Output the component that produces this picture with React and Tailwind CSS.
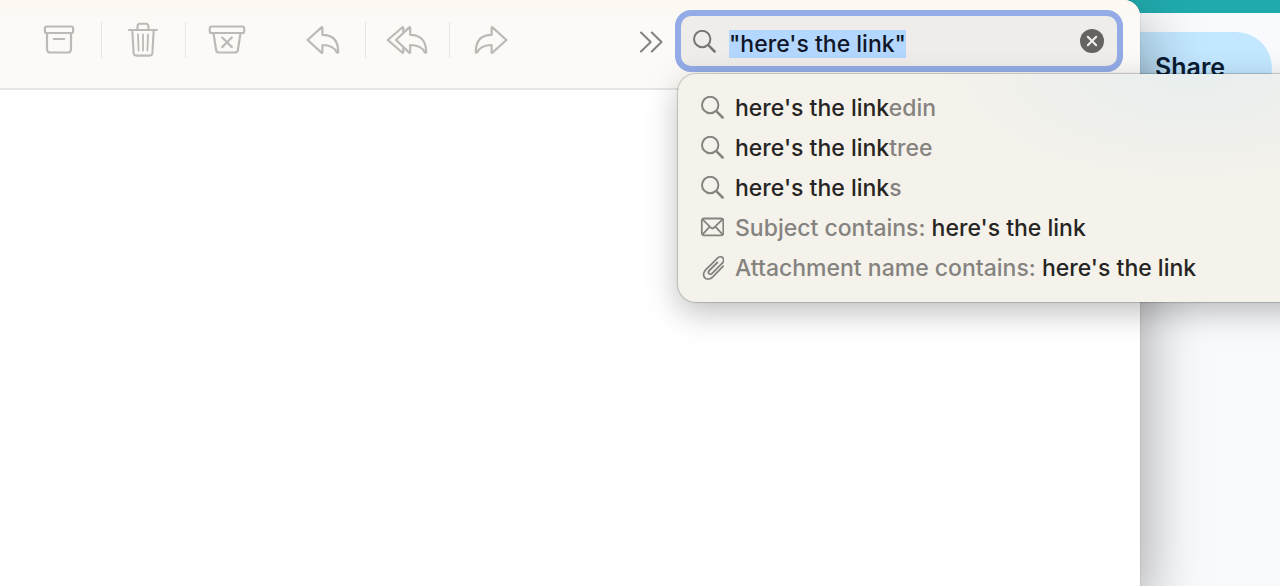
import { useEffect, useRef, useState } from "react";

const SearchIcon = ({ className }) => (
    <svg viewBox="0 0 24 24" className={className} fill="none" stroke="currentColor" strokeLinecap="round">
        <circle cx="10.2" cy="9" r="8.2" strokeWidth="2" />
        <path d="M16.300 15.200l6.300 6.300" strokeWidth="2.5" />
    </svg>
);

const MailIcon = ({ className }) => (
    <svg viewBox="0 0 24 24" className={className} fill="none" stroke="currentColor" strokeWidth="1.8" strokeLinecap="round" strokeLinejoin="round">
        <rect x="1.800" y="2.500" width="21.500" height="16.800" rx="2" />
        <path d="M2.800 3.700l8 8c1 1 2.200 1 3.200 0l8.300-8M2.800 18.200l6.500-7M22.300 18.200l-6.500-7" />
    </svg>
);

const ClipIcon = ({ className }) => (
    <svg viewBox="0 0 24 24" className={className} fill="none" stroke="currentColor" strokeWidth="1.8" strokeLinecap="round" strokeLinejoin="round">
        <path d="M23.200 10.200L12.800 20.800c-2.400 2.400-5.800 3-7.900 1s-1.700-5.400.7-7.900L17.300 2.300c1.700-1.700 4.100-1.900 5.500-.5s1.200 3.700-.5 5.400L12.100 17.300c-1 1-2.400 1.200-3.200.4s-.6-2.200.4-3.200l8.100-8" />
    </svg>
);

const ArchiveIcon = () => (
    <svg width="32" height="34" viewBox="0 0 32 34" fill="none" stroke="currentColor" strokeWidth="2.2" strokeLinecap="round" strokeLinejoin="round">
        <rect x="1.900" y="3.500" width="28.200" height="6.500" rx="1.800" />
        <path d="M4 10v16.500a3 3 0 0 0 3 3h18a3 3 0 0 0 3-3V10M10.800 16h10.400" />
    </svg>
);

const TrashIcon = () => (
    <svg width="32" height="36" viewBox="0 0 32 36" fill="none" stroke="currentColor" strokeWidth="2.1" strokeLinecap="round" strokeLinejoin="round">
        <path d="M2 8h28M10.500 8V4.200a2.500 2.500 0 0 1 2.500-2.500h6a2.500 2.500 0 0 1 2.500 2.500V8" />
        <path d="M5.300 8l1.300 23a2.800 2.800 0 0 0 2.800 2.600h13.200a2.800 2.800 0 0 0 2.800-2.600L26.700 8" />
        <path d="M11 12.500l.6 16M16 12.500v16M21 12.500l-.6 16" strokeWidth="1.800" />
    </svg>
);

const JunkIcon = () => (
    <svg width="38" height="34" viewBox="0 0 38 34" fill="none" stroke="currentColor" strokeWidth="2.2" strokeLinecap="round" strokeLinejoin="round">
        <rect x="1.800" y="3.500" width="34.400" height="6.500" rx="1.800" />
        <path d="M5.500 10l2.600 17a3 3 0 0 0 3 2.500h15.800a3 3 0 0 0 3-2.500l2.600-17M14.200 14.500l9.600 9.600M23.800 14.500l-9.600 9.600" />
    </svg>
);

const ReplyIcon = ({ className }) => (
    <svg width="34" height="30" viewBox="0 0 34 30" className={className} fill="none" stroke="currentColor" strokeWidth="2.2" strokeLinejoin="round">
        <path d="M1.600 15L15.500 2.400c.4-.4.900-.2.900.4V9.900C27 9.900 32.200 16 32.200 27c0 .8-.8 1-1.300.4C28.300 22.200 24 20 16.400 20v7.200c0 .6-.5.800-.9.400z" />
    </svg>
);

const ReplyAllIcon = () => (
    <svg width="42" height="30" viewBox="0 0 42 30" fill="none" stroke="currentColor" strokeWidth="2.2" strokeLinejoin="round">
        <path d="M10 15L23.300 2.400c.4-.4.900-.2.900.4V9.900C34.500 9.900 40.200 16 40.200 27c0 .8-.8 1-1.300.4C36.300 22.200 31.600 20 24.200 20v7.200c0 .6-.5.800-.9.400z" />
        <path d="M17.300 7.500V3c0-.8-.6-1-1.100-.5L1.800 15l14.400 12.500c.5.500 1.100.3 1.100-.5v-4.700" />
    </svg>
);

const groups = [
    [
        { label: "Archive", icon: <ArchiveIcon /> },
        { label: "Delete", icon: <TrashIcon /> },
        { label: "Move to Junk", icon: <JunkIcon /> },
    ],
    [
        { label: "Reply", icon: <ReplyIcon /> },
        { label: "Reply All", icon: <ReplyAllIcon /> },
        { label: "Forward", icon: <ReplyIcon className="-scale-x-100" /> },
    ],
];

const suggestions = [
    { icon: SearchIcon, match: "here's the link", after: "edin" },
    { icon: SearchIcon, match: "here's the link", after: "tree" },
    { icon: SearchIcon, match: "here's the link", after: "s" },
    { icon: MailIcon, before: "Subject contains: ", match: "here's the link" },
    { icon: ClipIcon, before: "Attachment name contains: ", match: "here's the link" },
];

const SearchField = () => {
    const [query, setQuery] = useState("\"here's the link\"");
    const inputRef = useRef(null);

    //Start with the whole query selected
    useEffect(() => {
        inputRef.current.focus();
        inputRef.current.select();
    }, []);

    return (
        <div className="relative w-[448px] shrink-0">
            <div className="flex h-[62px] items-center rounded-2xl border-6 border-[#93abe6] bg-[#efede9] pl-[11px] pr-[13px]">
                <SearchIcon className="mt-0.5 size-6 shrink-0 text-[#777673]" />
                <input
                    ref={inputRef}
                    type="text"
                    aria-label="Search"
                    value={query}
                    onChange={(e) => setQuery(e.target.value)}
                    className="ml-[13px] mt-1.5 h-7 min-w-0 flex-1 bg-transparent text-[23px] leading-7 font-[450] text-[#101528] outline-none selection:bg-[#b3d7ff] selection:text-[#101528]"
                />
                <button
                    aria-label="Clear search"
                    onClick={() => setQuery("")}
                    className="flex size-6 items-center justify-center rounded-full bg-[#656461] text-[#f3f1ed]"
                >
                    <svg width="24" height="24" viewBox="0 0 24 24" fill="none" stroke="currentColor" strokeWidth="2" strokeLinecap="round">
                        <path d="M7.800 7.800l8.400 8.400M16.200 7.800l-8.400 8.400" />
                    </svg>
                </button>
            </div>

            {/* Suggestions */}
            <ul className="absolute left-[3px] top-full mt-0.5 w-[660px] rounded-[18px] bg-[#f5f2eb] bg-radial-[at_78%_0%] from-[#e8eeee] to-[#f5f2eb] to-35% py-[14px] shadow-[0_0_1px_1px_rgba(0,0,0,0.18),0_10px_32px_rgba(0,0,0,0.26)]">
                {suggestions.map(({ icon: Icon, before, match, after }, index) => (
                    <li key={index}>
                        <button className="flex h-10 w-full items-center whitespace-pre pl-[22px] text-left text-[23px] leading-7 font-[450] text-[#858380]">
                            <Icon className="mr-[11px] size-6 shrink-0" />
                            <span>
                                {before}
                                <span className="text-[#262523]">{match}</span>
                                {after}
                            </span>
                        </button>
                    </li>
                ))}
            </ul>
        </div>
    );
};

const App = () => {
    return (
        <div className="flex min-h-screen overflow-hidden bg-[#f9fafd] font-['Inter',sans-serif] [font-optical-sizing:none]">
            <main className="relative z-10 flex-1 rounded-tr-2xl bg-white shadow-[0_0_1px_0_rgba(0,0,0,0.5),0_24px_64px_rgba(0,0,0,0.4)]">
                <header className="flex h-[90px] items-start rounded-tr-2xl border-b-2 border-[#e6e5e2] bg-linear-to-b from-[#fff8f1] to-[#fbfaf6] to-20% pl-[18px] pr-[17px] pt-[10px]">
                    <div className="mt-3 flex gap-3">
                        {groups.map((group, index) => (
                            <div key={index} className="flex h-9 divide-x divide-[#e7e6e2] text-[#bbbab6]">
                                {group.map(({ label, icon }) => (
                                    <button key={label} aria-label={label} className="flex w-21 items-center justify-center pr-0.5">
                                        {icon}
                                    </button>
                                ))}
                            </div>
                        ))}
                    </div>
                    <button aria-label="More" className="ml-auto mr-3 mt-5 text-[#82817e]">
                        <svg width="24" height="24" viewBox="0 0 24 24" fill="none" stroke="currentColor" strokeWidth="2" strokeLinecap="round" strokeLinejoin="round">
                            <path d="M2 2.500l9.700 9.500-9.700 9.500M12.800 2.500l9.700 9.500-9.700 9.500" />
                        </svg>
                    </button>
                    <SearchField />
                </header>
            </main>

            {/* Page behind the mail window, it runs on under the rounded corner */}
            <aside className="-ml-5 w-[160px] shrink-0 border-t-[13px] border-[#20aaae]">
                <button className="mt-[19px] h-[72px] w-[152px] rounded-r-[36px] bg-[#c2e7ff] pl-[35px] text-left text-[25px] font-semibold text-[#0b1d35]">
                    Share
                </button>
            </aside>
        </div>
    );
};

export default App;
